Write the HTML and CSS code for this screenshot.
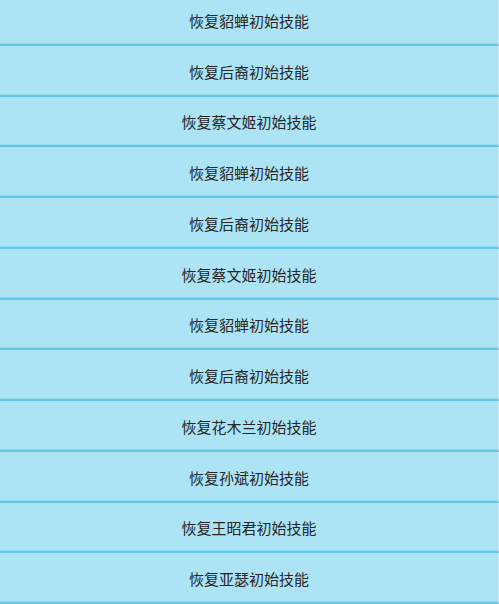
FILE: index.html
```html
<!DOCTYPE html>
<html lang="zh-CN">
<head>
    <meta charset="UTF-8">
    <meta name="viewport" content="width=device-width, initial-scale=1.0">
    <title>恢复初始技能</title>
    <link rel="stylesheet" href="styles.css">
</head>
<body>

    <!-- Skill reset list -->
    <div class="skill-list">
        <button class="skill-btn">恢复貂蝉初始技能</button>
        <button class="skill-btn">恢复后裔初始技能</button>
        <button class="skill-btn">恢复蔡文姬初始技能</button>
        <button class="skill-btn">恢复貂蝉初始技能</button>
        <button class="skill-btn">恢复后裔初始技能</button>
        <button class="skill-btn">恢复蔡文姬初始技能</button>
        <button class="skill-btn">恢复貂蝉初始技能</button>
        <button class="skill-btn">恢复后裔初始技能</button>
        <button class="skill-btn">恢复花木兰初始技能</button>
        <button class="skill-btn">恢复孙斌初始技能</button>
        <button class="skill-btn">恢复王昭君初始技能</button>
        <button class="skill-btn">恢复亚瑟初始技能</button>
    </div>

</body>
</html>
```

FILE: styles.css
```css
html, body {
    margin: 0;
    padding: 0;
    height: 100%;
    overflow: hidden;
    background-color: #ace4f5;
}
.skill-list {
    display: flex;
    flex-direction: column;
    margin-top: -5px;
}
.skill-btn {
    flex: none;
    box-sizing: border-box;
    height: 50.75px;
    width: 100%;
    margin: 0;
    padding: 2px 0 0;
    background-color: #ace4f5;
    border: none;
    border-right: 1px solid #c4ecf8;
    border-bottom: 2px solid #62c8e8;
    box-shadow: inset 0 -1px 0 #93daef;
    color: #262626;
    font-family: "Noto Sans CJK SC", "Noto Sans", sans-serif;
    font-size: 15px;
    text-align: center;
    cursor: pointer;
}
```
